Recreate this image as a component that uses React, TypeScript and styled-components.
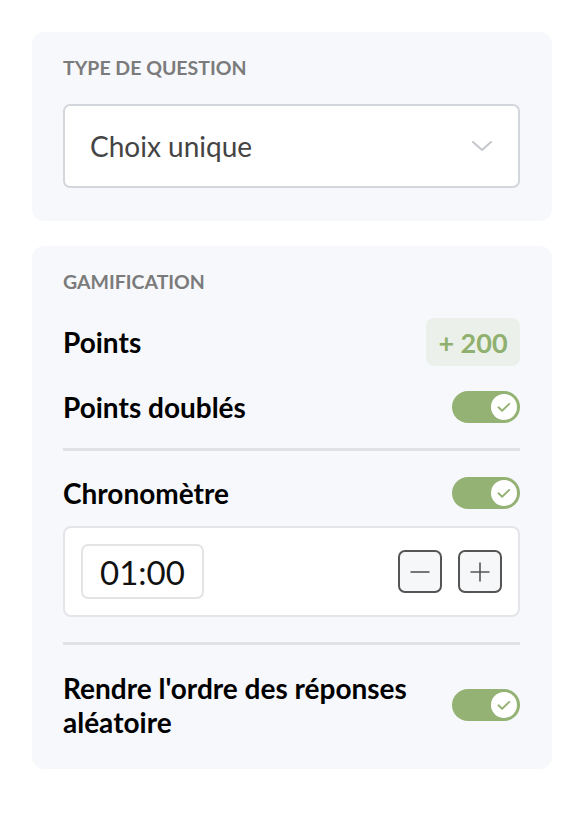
import styled, { createGlobalStyle } from 'styled-components';

const GlobalStyle = createGlobalStyle`
  body {
    margin: 0;
    background: #ffffff;
    font-family: Lato, "Noto Sans", sans-serif;
  }
`;

const Page = styled.div`
  display: flex;
  flex-direction: column;
  gap: 25px;
  padding: 32px 18px 32px 32px;
`;

const Card = styled.section<{ $bottom?: number }>`
  background: #f7f8fb;
  border-radius: 12px;
  padding: 25px 32px ${(p) => p.$bottom ?? 32}px 31px;
  display: flex;
  flex-direction: column;
`;

const SectionLabel = styled.div`
  font-size: 19.5px;
  line-height: 22px;
  font-weight: 700;
  color: #7b7b7b;
  text-transform: uppercase;
  margin-bottom: 25px;
`;

const Select = styled.div`
  height: 84px;
  box-sizing: border-box;
  background: #fff;
  border: 2px solid #d3d6db;
  border-radius: 7px;
  display: flex;
  align-items: center;
  justify-content: space-between;
  padding: 0 26px 0 25px;
  font-size: 28px;
  color: #444;
`;

const Row = styled.div<{ $gapTop?: number }>`
  display: flex;
  align-items: center;
  justify-content: space-between;
  margin-top: ${(p) => p.$gapTop ?? 0}px;
`;

const RowLabel = styled.div<{ $lineHeight?: number }>`
  font-size: 28px;
  line-height: ${(p) => p.$lineHeight ?? 32}px;
  font-weight: 700;
  color: #000;
  max-width: 360px;
`;

const Badge = styled.div`
  width: 94px;
  height: 48px;
  border-radius: 8px;
  background: #ecf0ea;
  color: #8fb06e;
  font-size: 27px;
  font-weight: 700;
  display: flex;
  align-items: center;
  justify-content: center;
`;

const Toggle = styled.div`
  width: 68px;
  height: 32px;
  border-radius: 16px;
  background: #94b273;
  display: flex;
  align-items: center;
  justify-content: flex-end;
  padding-right: 3px;
  box-sizing: border-box;
  flex-shrink: 0;
`;

const Knob = styled.div`
  width: 26px;
  height: 26px;
  border-radius: 50%;
  background: #fff;
  display: flex;
  align-items: center;
  justify-content: center;
`;

const Divider = styled.hr`
  border: none;
  height: 3px;
  background: #e0e2e6;
  margin: 25px 0 0;
`;

const TimerBox = styled.div`
  margin-top: 17px;
  height: 91px;
  box-sizing: border-box;
  background: #fff;
  border: 2px solid #e3e5e9;
  border-radius: 8px;
  display: flex;
  align-items: center;
  justify-content: space-between;
  padding: 0 16px 0 16px;
`;

const TimeInput = styled.div`
  width: 123px;
  height: 55px;
  box-sizing: border-box;
  border: 2px solid #e3e4e6;
  border-radius: 7px;
  display: flex;
  align-items: center;
  justify-content: center;
  font-size: 33px;
  color: #111;
`;

const Steppers = styled.div`
  display: flex;
  gap: 16px;
`;

const StepButton = styled.button`
  width: 44px;
  height: 43px;
  box-sizing: border-box;
  border: 2px solid #555;
  border-radius: 7px;
  background: #f6f7f9;
  display: flex;
  align-items: center;
  justify-content: center;
  padding: 0;
`;

const Check = () => (
  <svg width="16" height="16" viewBox="0 0 16 16" fill="none">
    <path d="M2.5 8.3l3.6 3.4 7.2-6.8" stroke="#94b273" strokeWidth="1.9" strokeLinecap="round" strokeLinejoin="round" />
  </svg>
);

const Switch = () => (
  <Toggle>
    <Knob>
      <Check />
    </Knob>
  </Toggle>
);

export default function App() {
  return (
    <>
      <GlobalStyle />
      <Page>
        <Card $bottom={33}>
          <SectionLabel>Type de question</SectionLabel>
          <Select>
            <span>Choix unique</span>
            <svg width="20" height="11" viewBox="0 0 20 11" fill="none">
              <path d="M1 1l9 8 9-8" stroke="#c4c7cc" strokeWidth="2" strokeLinecap="round" strokeLinejoin="round" />
            </svg>
          </Select>
        </Card>
        <Card $bottom={30}>
          <SectionLabel>Gamification</SectionLabel>
          <Row>
            <RowLabel>Points</RowLabel>
            <Badge>+ 200</Badge>
          </Row>
          <Row $gapTop={25}>
            <RowLabel>Points doublés</RowLabel>
            <Switch />
          </Row>
          <Divider />
          <Row $gapTop={26}>
            <RowLabel>Chronomètre</RowLabel>
            <Switch />
          </Row>
          <TimerBox>
            <TimeInput>01:00</TimeInput>
            <Steppers>
              <StepButton aria-label="moins">
                <svg width="22" height="22" viewBox="0 0 22 22">
                  <path d="M1.5 11h19" stroke="#555" strokeWidth="1.6" />
                </svg>
              </StepButton>
              <StepButton aria-label="plus">
                <svg width="22" height="22" viewBox="0 0 22 22">
                  <path d="M1.5 11h19M11 1.5v19" stroke="#555" strokeWidth="1.6" />
                </svg>
              </StepButton>
            </Steppers>
          </TimerBox>
          <Divider />
          <Row $gapTop={26}>
            <RowLabel $lineHeight={34}>Rendre l'ordre des réponses aléatoire</RowLabel>
            <Switch />
          </Row>
        </Card>
      </Page>
    </>
  );
}
